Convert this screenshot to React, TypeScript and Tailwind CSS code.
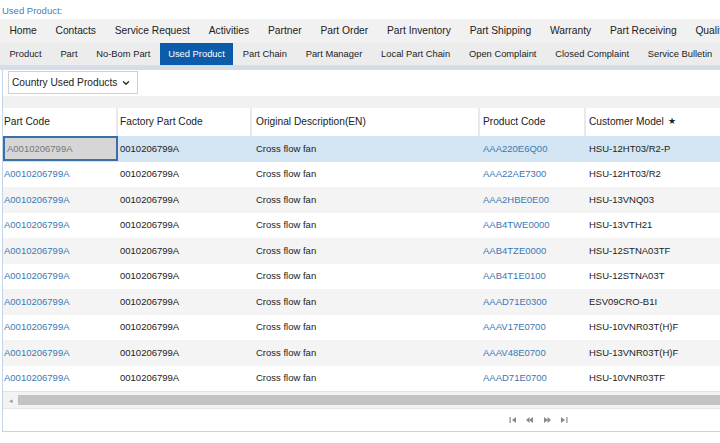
import { ChevronDown } from 'lucide-react';

const topTabs = [
  'Home',
  'Contacts',
  'Service Request',
  'Activities',
  'Partner',
  'Part Order',
  'Part Inventory',
  'Part Shipping',
  'Warranty',
  'Part Receiving',
  'Quality',
];

const subTabs = [
  'Product',
  'Part',
  'No-Bom Part',
  'Used Product',
  'Part Chain',
  'Part Manager',
  'Local Part Chain',
  'Open Complaint',
  'Closed Complaint',
  'Service Bulletin',
];

const rows = [
  ['AAA220E6Q00', 'HSU-12HT03/R2-P'],
  ['AAA22AE7300', 'HSU-12HT03/R2'],
  ['AAA2HBE0E00', 'HSU-13VNQ03'],
  ['AAB4TWE0000', 'HSU-13VTH21'],
  ['AAB4TZE0000', 'HSU-12STNA03TF'],
  ['AAB4T1E0100', 'HSU-12STNA03T'],
  ['AAAD71E0300', 'ESV09CRO-B1I'],
  ['AAAV17E0700', 'HSU-10VNR03T(H)F'],
  ['AAAV48E0700', 'HSU-13VNR03T(H)F'],
  ['AAAD71E0700', 'HSU-10VNR03TF'],
];

const cols = 'grid grid-cols-[115px_134px_228px_106px_1fr]';

const PagerIcon = ({ dir, edge }: { dir: 'l' | 'r'; edge: boolean }) => (
  <svg width="8" height="6" viewBox="0 0 8 6" className="text-[#8a8a8a]">
    {dir === 'l' ? (
      <g fill="currentColor">
        {edge ? <rect x="0.5" y="0" width="1.2" height="6" /> : <path d="M0 3 L3.5 0 L3.5 6 Z" />}
        <path d="M3 3 L7 0 L7 6 Z" />
      </g>
    ) : (
      <g fill="currentColor">
        <path d="M1 0 L5 3 L1 6 Z" />
        {edge ? <rect x="6.3" y="0" width="1.2" height="6" /> : <path d="M4.5 0 L8 3 L4.5 6 Z" />}
      </g>
    )}
  </svg>
);

export default function App() {
  return (
    <div className="w-[720px] h-[443px] overflow-hidden bg-white font-['Liberation_Sans',Arial,sans-serif]">
      <div className="h-[19px] pl-[2px] pt-[5px] text-[9.5px] leading-[11px] text-[#3f7dbd]">Used Product:</div>

      <div className="flex h-[24px] items-center whitespace-nowrap bg-[#f1f1f1] text-[10.25px] text-[#222]">
        {topTabs.map((t) => (
          <div key={t} className="px-[9.4px]">
            {t}
          </div>
        ))}
      </div>

      <div className="flex h-[22px] items-stretch whitespace-nowrap bg-[#ececec] text-[9.35px] text-[#222]">
        {subTabs.map((t) =>
          t === 'Used Product' ? (
            <div key={t} className="flex items-center bg-[#0d5ca9] px-[8.5px] text-white">
              {t}
            </div>
          ) : (
            <div key={t} className="flex items-center px-[9.4px]">
              {t}
            </div>
          ),
        )}
      </div>

      <div className="h-[5px] bg-[#d5dee8]" />

      <div className="ml-[2px] h-[362px] border-b border-l border-[#c3d5ea]">
        <div className="h-[26px] pl-[5px] pt-[1px]">
          <div className="flex h-[23px] w-[130px] items-center gap-[4px] border border-[#d0d0d0] bg-white pl-[3px] text-[10.2px] text-[#222]">
            Country Used Products
            <ChevronDown className="h-[10px] w-[10px]" strokeWidth={3} />
          </div>
        </div>

        <div className="h-[12px] bg-[#f1f1f1]" />

        <div className={`${cols} h-[28px] items-center bg-white text-[10.2px] text-[#222]`}>
          <div className="flex h-full items-center border-r-2 border-[#e9e9e9] pl-[1px]">Part Code</div>
          <div className="flex h-full items-center border-r-2 border-[#e9e9e9] pl-[2px]">Factory Part Code</div>
          <div className="flex h-full items-center border-r-2 border-[#e9e9e9] pl-[4px]">Original Description(EN)</div>
          <div className="flex h-full items-center border-r-2 border-[#e9e9e9] pl-[3px]">Product Code</div>
          <div className="flex h-full items-center gap-[4px] pl-[3px]">
            Customer Model <span className="text-[9px]">★</span>
          </div>
        </div>

        {rows.map(([product, model], i) => {
          const selected = i === 0;
          const bg = selected ? 'bg-[#d3e5f3]' : i % 2 === 0 ? 'bg-[#f4f4f4]' : 'bg-white';
          return (
            <div key={product} className={`${cols} h-[25.5px] items-center text-[9.5px] ${bg}`}>
              {selected ? (
                <div className="flex h-[25px] items-center border-2 border-[#3b6fa5] bg-[#d6d6d6] pl-[2px] text-[#777]">
                  A0010206799A
                </div>
              ) : (
                <div className="pl-[1px] text-[#3a78b5]">A0010206799A</div>
              )}
              <div className="pl-[2px] text-[#222]">0010206799A</div>
              <div className="pl-[4px] text-[#222]">Cross flow fan</div>
              <div className="pl-[3px] text-[#3a78b5]">{product}</div>
              <div className="pl-[3px] text-[#222]">{model}</div>
            </div>
          );
        })}

        <div className="flex h-[17px] items-center border-t border-[#e2e2e2] bg-[#f3f3f3]">
          <div className="flex w-[15px] justify-center text-[7px] leading-none text-[#999]">◂</div>
          <div className="h-[10px] flex-1 bg-[#c3c3c3]" />
        </div>

        <div className="flex h-[22px] items-center border-t border-[#e6e6e6] pl-[506px] gap-[9px]">
          <PagerIcon dir="l" edge />
          <PagerIcon dir="l" edge={false} />
          <PagerIcon dir="r" edge={false} />
          <PagerIcon dir="r" edge />
        </div>
      </div>
    </div>
  );
}
